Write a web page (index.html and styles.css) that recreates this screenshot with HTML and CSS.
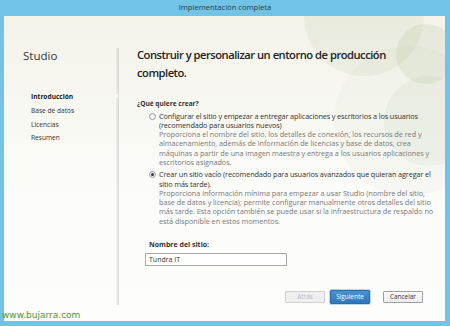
FILE: index.html
```html
<!DOCTYPE html>
<html lang="es">
<head>
<meta charset="utf-8">
<title>Implementación completa</title>
<link rel="stylesheet" href="styles.css">
</head>
<body>
<div class="titlebar">Implementación completa</div>
<div class="window">
  <div class="deco deco-a"></div>
  <div class="deco deco-b"></div>
  <div class="deco deco-c"></div>
  <div class="deco deco-d"></div>
  <aside class="sidebar">
    <div class="brand">Studio</div>
    <ul class="steps">
      <li class="step current">Introducción</li>
      <li class="step">Base de datos</li>
      <li class="step">Licencias</li>
      <li class="step">Resumen</li>
    </ul>
  </aside>
  <div class="divider"><span class="notch"></span></div>
  <main class="main">
    <h1 class="heading">Construir y personalizar un entorno de producción<br>completo.</h1>
    <div class="question">¿Qué quiere crear?</div>
    <div class="options">
      <div class="option">
        <span class="radio"></span>
        <div class="option-text">
          <div class="option-title">Configurar el sitio y empezar a entregar aplicaciones y escritorios a los usuarios (recomendado para usuarios nuevos)</div>
          <div class="option-desc">Proporciona el nombre del sitio, los detalles de conexión, los recursos de red y almacenamiento, además de información de licencias y base de datos, crea máquinas a partir de una imagen maestra y entrega a los usuarios aplicaciones y escritorios asignados.</div>
        </div>
      </div>
      <div class="option">
        <span class="radio checked"></span>
        <div class="option-text">
          <div class="option-title">Crear un sitio vacío (recomendado para usuarios avanzados que quieran agregar el sitio más tarde).</div>
          <div class="option-desc">Proporciona información mínima para empezar a usar Studio (nombre del sitio, base de datos y licencia); permite configurar manualmente otros detalles del sitio más tarde. Esta opción también se puede usar si la infraestructura de respaldo no está disponible en estos momentos.</div>
        </div>
      </div>
    </div>
    <div class="field">
      <div class="field-label">Nombre del sitio:</div>
      <div class="input">Tundra IT</div>
    </div>
    <div class="buttons">
      <span class="btn disabled">Atrás</span>
      <span class="btn primary">Siguiente</span>
      <span class="btn cancel">Cancelar</span>
    </div>
  </main>
</div>
<div class="watermark">www.bujarra.com</div>
</body>
</html>
```
FILE: styles.css
```css
* { box-sizing: border-box; }
html, body { margin: 0; padding: 0; }
body {
  position: relative;
  width: 450px;
  height: 326px;
  overflow: hidden;
  background: #71c4e6;
  font-family: "Open Sans", "Noto Sans", sans-serif;
  color: #333;
}
.titlebar {
  height: 16px;
  line-height: 15px;
  text-align: center;
  font-size: 7.6px;
  color: #2a3a44;
}
.window {
  position: relative;
  overflow: hidden;
  display: flex;
  height: 305px;
  margin: 0 5px 0 4px;
  background: linear-gradient(#f3f3ea 0%, #f8f8f2 30%, #fcfcfa 60%, #fdfdfb 100%);
}
.deco {
  position: absolute;
  border-radius: 50%;
  background: rgba(170, 182, 140, 0.13);
  pointer-events: none;
}
.deco-a { width: 120px; height: 120px; left: 300px; top: -60px; }
.deco-b { width: 60px; height: 60px; left: 392px; top: 8px; background: rgba(160, 178, 130, 0.16); }
.deco-c { width: 90px; height: 90px; left: 380px; top: 60px; background: rgba(170, 182, 150, 0.10); }
.deco-d { width: 150px; height: 150px; left: 330px; top: 30px; background: rgba(175, 185, 150, 0.06); }

.sidebar {
  width: 112px;
  flex: none;
  padding: 33px 0 0 19px;
  position: relative;
}
.brand {
  font-size: 11.5px;
  line-height: 14px;
  color: #333;
}
.steps {
  list-style: none;
  margin: 27px 0 0 8px;
  padding: 0;
}
.step {
  font-size: 6.6px;
  line-height: 13.8px;
  color: #333;
}
.step.current { font-weight: 700; color: #222; }

.divider {
  width: 3px;
  flex: none;
  margin: 32px 0 16px;
  position: relative;
  background: linear-gradient(to right, rgba(0,0,0,0.03), rgba(0,0,0,0.14));
}
.notch {
  position: absolute;
  left: -1px;
  top: 45px;
  width: 0;
  height: 0;
  border-top: 3px solid transparent;
  border-bottom: 3px solid transparent;
  border-right: 3px solid #fff;
}

.main {
  flex: 1;
  position: relative;
  padding: 30px 0 0 18px;
  display: flex;
  flex-direction: column;
}
.heading {
  margin: 0;
  width: 300px;
  font-size: 11.2px;
  letter-spacing: -0.5px;
  line-height: 18px;
  font-weight: 600;
  color: #222;
}
.question {
  margin-top: 16.5px;
  font-size: 6.6px;
  line-height: 9px;
  font-weight: 700;
  color: #333;
}
.options {
  margin: 4px 0 0 12px;
  display: flex;
  flex-direction: column;
  gap: 3px;
}
.option {
  display: flex;
  align-items: flex-start;
}
.radio {
  flex: none;
  width: 7px;
  height: 7px;
  margin: 1px 3px 0 0;
  border: 1px solid #9a9a9a;
  border-radius: 50%;
  background: radial-gradient(circle, #fff 0%, #e8e8e8 100%);
  position: relative;
}
.radio.checked::after {
  content: "";
  position: absolute;
  left: 1px;
  top: 1px;
  width: 3px;
  height: 3px;
  border-radius: 50%;
  background: #333;
}
.option-text {
  width: 275px;
  font-size: 7.3px;
  letter-spacing: -0.05px;
  line-height: 9.3px;
}
.option-title { color: #333; letter-spacing: -0.13px; }
.option-desc { color: #7a7a7a; }

.field {
  margin: 14px 0 0 12px;
}
.field-label {
  font-size: 7px;
  line-height: 9px;
  font-weight: 700;
  color: #333;
}
.input {
  margin: 3.5px 0 0 -4px;
  width: 142px;
  height: 13px;
  border: 1px solid #a8a8a8;
  background: #fff;
  font-size: 7px;
  line-height: 11px;
  padding-left: 3px;
  color: #333;
}
.buttons {
  margin: 24px 22px 0 0;
  display: flex;
  justify-content: flex-end;
  align-items: center;
}
.btn {
  display: block;
  width: 40px;
  height: 12px;
  font-size: 6.4px;
  line-height: 10px;
  text-align: center;
  border: 1px solid #adadad;
  border-radius: 1px;
}
.btn.disabled {
  color: #b9b9b9;
  border-color: #cfcfcf;
  background: #efefef;
}
.btn.primary {
  margin-left: 5px;
  height: 14px;
  line-height: 12px;
  color: #fff;
  border-color: #2c6ba5;
  background: linear-gradient(#4b92d1, #2f78bb);
  box-shadow: 0 0 0 1px #bcd8ef;
}
.btn.cancel {
  margin-left: 13px;
  color: #333;
  background: linear-gradient(#fafafa, #ececec);
  border-color: #a0a0a0;
}
.watermark {
  position: absolute;
  left: 2px;
  top: 310px;
  font-family: "DejaVu Sans", sans-serif;
  font-size: 9px;
  line-height: 11px;
  color: #4f9a22;
}
```
